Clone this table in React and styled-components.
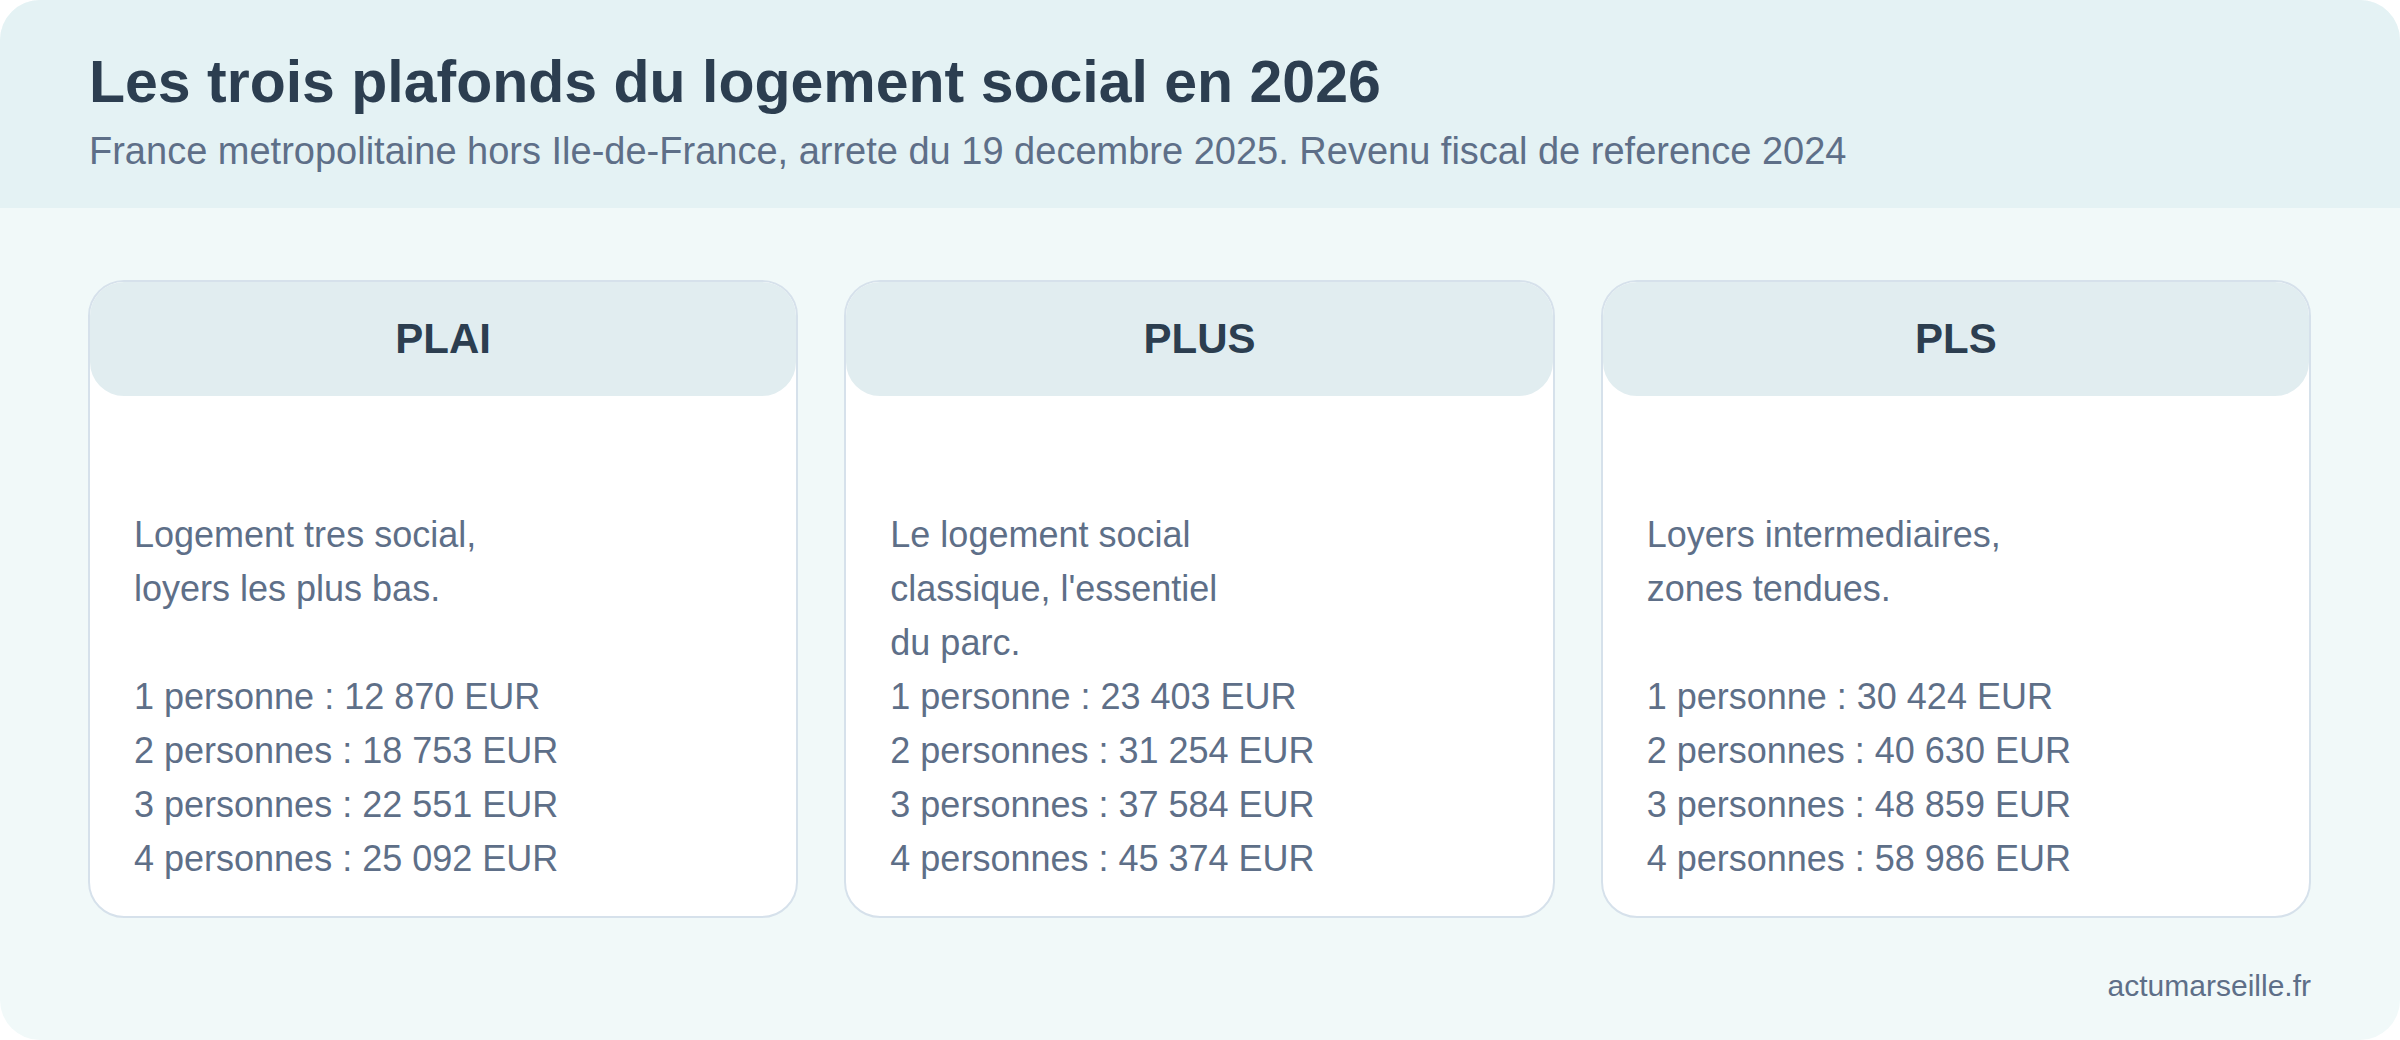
import styled, { createGlobalStyle } from "styled-components";

const GlobalStyle = createGlobalStyle`
  html, body {
    margin: 0;
    padding: 0;
    background: #ffffff;
  }
  * {
    box-sizing: border-box;
  }
`;

const plafonds = [
  {
    name: "PLAI",
    lines: ["Logement tres social,", "loyers les plus bas."],
    rows: [
      "1 personne : 12 870 EUR",
      "2 personnes : 18 753 EUR",
      "3 personnes : 22 551 EUR",
      "4 personnes : 25 092 EUR",
    ],
  },
  {
    name: "PLUS",
    lines: ["Le logement social", "classique, l'essentiel", "du parc."],
    rows: [
      "1 personne : 23 403 EUR",
      "2 personnes : 31 254 EUR",
      "3 personnes : 37 584 EUR",
      "4 personnes : 45 374 EUR",
    ],
  },
  {
    name: "PLS",
    lines: ["Loyers intermediaires,", "zones tendues."],
    rows: [
      "1 personne : 30 424 EUR",
      "2 personnes : 40 630 EUR",
      "3 personnes : 48 859 EUR",
      "4 personnes : 58 986 EUR",
    ],
  },
];

const App = () => {
  return (
    <>
      <GlobalStyle />
      <Frame>
        <Header>
          <Title>Les trois plafonds du logement social en 2026</Title>
          <Subtitle>
            France metropolitaine hors Ile-de-France, arrete du 19 decembre
            2025. Revenu fiscal de reference 2024
          </Subtitle>
        </Header>
        <Content>
          <CardGrid>
            {plafonds.map((p) => (
              <Card key={p.name}>
                <CardHead>{p.name}</CardHead>
                <CardBody>
                  <Description>
                    {p.lines.map((l) => (
                      <Line key={l}>{l}</Line>
                    ))}
                  </Description>
                  {p.rows.map((r) => (
                    <Line key={r}>{r}</Line>
                  ))}
                </CardBody>
              </Card>
            ))}
          </CardGrid>
          <Footer>actumarseille.fr</Footer>
        </Content>
      </Frame>
    </>
  );
};

const Frame = styled.div`
  width: 2400px;
  height: 1040px;
  border-radius: 40px;
  overflow: hidden;
  background: #f1f9f9;
  display: flex;
  flex-direction: column;
  font-family: "Liberation Sans", Arial, sans-serif;
`;

const Header = styled.div`
  height: 208px;
  background: #e4f2f4;
  padding: 48px 89px 0;
`;

const Title = styled.h1`
  margin: 0;
  font-size: 59px;
  line-height: 68px;
  font-weight: 700;
  color: #2c3e50;
`;

const Subtitle = styled.p`
  margin: 13px 0 0;
  font-size: 38px;
  line-height: 44px;
  color: #5e6f88;
`;

const Content = styled.div`
  flex: 1;
  padding: 72px 89px 0 88px;
  display: flex;
  flex-direction: column;
`;

const CardGrid = styled.div`
  display: grid;
  grid-template-columns: repeat(3, 1fr);
  gap: 46px;
`;

const Card = styled.div`
  height: 638px;
  background: #ffffff;
  border: 2px solid #d6e1eb;
  border-radius: 36px;
  overflow: hidden;
  display: flex;
  flex-direction: column;
`;

const CardHead = styled.div`
  height: 114px;
  flex-shrink: 0;
  background: #e1edf0;
  border-radius: 0 0 34px 34px;
  display: flex;
  align-items: center;
  justify-content: center;
  font-size: 42px;
  font-weight: 700;
  color: #2c3e50;
`;

const CardBody = styled.div`
  padding: 112px 44px 0;
  font-size: 36px;
  line-height: 54px;
  color: #5e6f88;
`;

const Description = styled.div`
  min-height: 162px;
`;

const Line = styled.div`
  white-space: nowrap;
`;

const Footer = styled.div`
  margin-top: 51px;
  text-align: right;
  font-size: 30px;
  line-height: 34px;
  color: #5e6f88;
`;

export default App;
